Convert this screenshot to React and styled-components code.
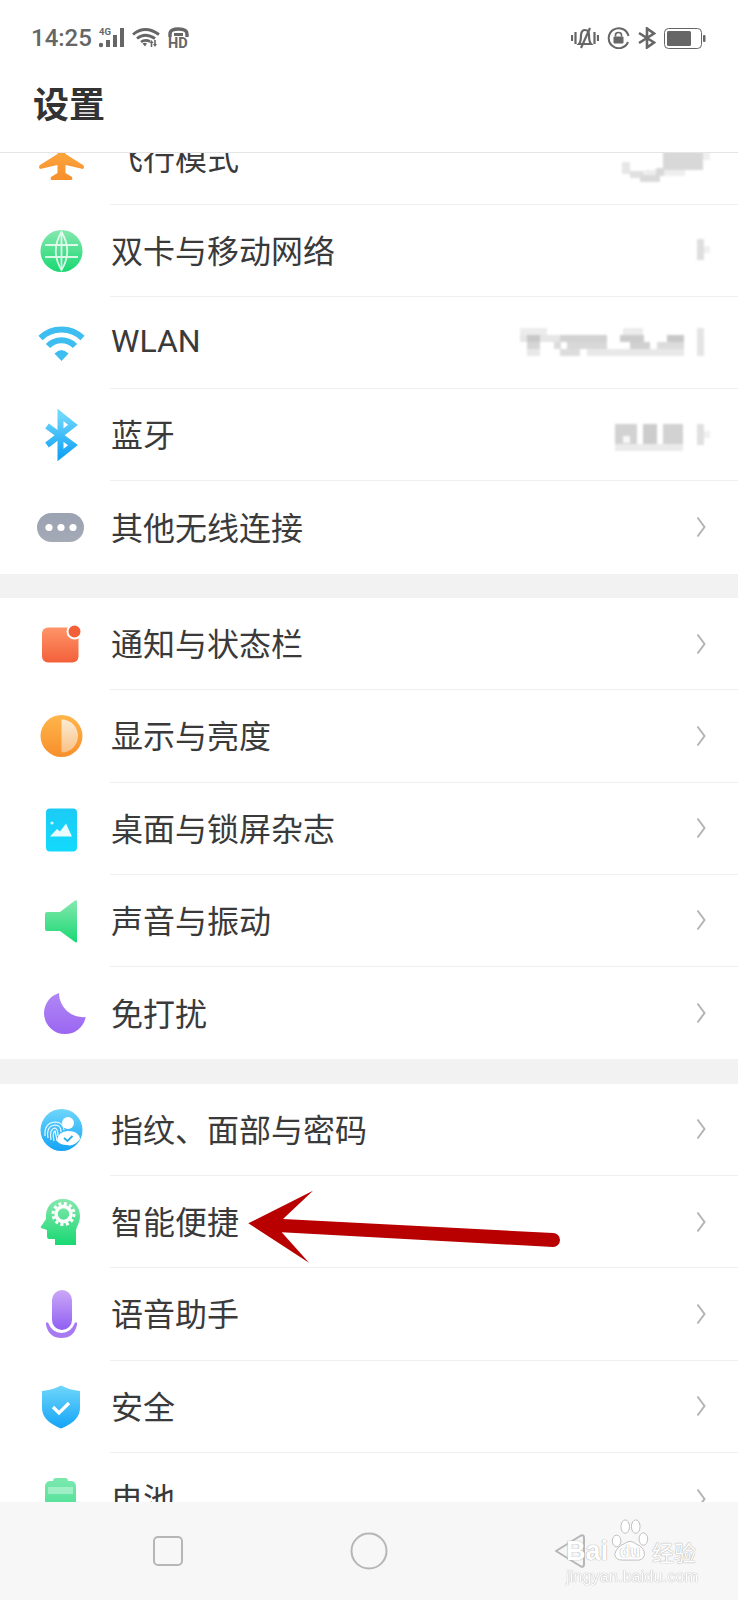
import React from 'react';
import styled, { createGlobalStyle } from 'styled-components';

const GlobalStyle = createGlobalStyle`
  html, body {
    margin: 0;
    padding: 0;
    background: #fff;
  }
`;

const Page = styled.div`
  position: relative;
  width: 738px;
  height: 1600px;
  display: flex;
  flex-direction: column;
  overflow: hidden;
  background: #fff;
  font-family: Roboto, "Noto Sans CJK SC", sans-serif;
`;

const Header = styled.header`
  flex: none;
  height: 153px;
  box-sizing: border-box;
  border-bottom: 1px solid #e4e4e4;
  background: #fff;
`;

const StatusBar = styled.div`
  height: 76px;
  box-sizing: border-box;
  padding: 0 32px 0 31px;
  display: flex;
  align-items: center;
  color: #666;
`;

const Time = styled.span`
  font-size: 24px;
  font-weight: 500;
  margin-right: 7px;
  color: #666;
`;

const StatusGroup = styled.div`
  display: flex;
  align-items: center;
  gap: ${(p) => p.$gap}px;
  margin-left: ${(p) => (p.$right ? 'auto' : '0')};
`;

const Title = styled.h1`
  margin: 0;
  height: 58px;
  padding-left: 33px;
  font-size: 36px;
  line-height: 60px;
  font-weight: 700;
  color: #333;
`;

const ListViewport = styled.main`
  flex: 1;
  min-height: 0;
  overflow: hidden;
`;

// first row is scrolled partly under the header
const List = styled.div`
  margin-top: -40.75px;
`;

const Section = styled.section`
  background: #fff;
`;

const SectionGap = styled.div`
  height: 24.5px;
  background: #f2f2f2;
`;

const Row = styled.div`
  height: 92.25px;
  display: flex;
  align-items: stretch;
`;

const IconSlot = styled.div`
  flex: none;
  width: 110px;
  padding-left: 24px;
  box-sizing: border-box;
  display: flex;
  align-items: center;
`;

const Body = styled.div`
  flex: 1;
  min-width: 0;
  display: flex;
  align-items: center;
  justify-content: space-between;
  padding-right: ${(p) => (p.$mosaic ? 28 : 32)}px;
  border-bottom: ${(p) => (p.$last ? 'none' : '1px solid #efefef')};
`;

const Label = styled.span`
  padding-left: 1px;
  padding-bottom: 3px;
  font-size: 32px;
  color: #3a3a3a;
  white-space: nowrap;
`;

const MosaicSvg = styled.svg`
  flex: none;
  filter: blur(1.2px);
`;

const NavBar = styled.nav`
  position: relative;
  flex: none;
  height: 98px;
  padding: 0 67.5px;
  display: grid;
  grid-template-columns: repeat(3, 201px);
  background: #f7f7f7;
`;

const NavCell = styled.div`
  display: flex;
  align-items: center;
  justify-content: center;
`;

const Watermark = styled.div`
  position: absolute;
  left: 566px;
  top: 18px;
  width: 134px;
  color: #fff;
  text-shadow: 0 0 1px #a8a8a8, 0 0 1px #a8a8a8;
`;

const MarkTop = styled.div`
  height: 46px;
  display: flex;
  align-items: flex-end;
  font-family: "Liberation Sans", sans-serif;
`;

const MarkBai = styled.span`
  font-size: 27px;
  line-height: 30px;
  font-weight: 700;
  width: 45px;
`;

const MarkDu = styled.span`
  position: relative;
  width: 38px;
  font-size: 17px;
  line-height: 28px;
  font-weight: 700;
  text-align: center;
`;

const DuText = styled.span`
  position: relative;
`;

const Paw = styled.svg`
  position: absolute;
  left: -1px;
  bottom: 4px;
`;

const MarkJy = styled.span`
  padding-left: 3px;
  font-family: "Noto Sans CJK SC", sans-serif;
  font-size: 22px;
  line-height: 30px;
`;

const MarkUrl = styled.div`
  margin-top: 2px;
  font-family: "Liberation Sans", sans-serif;
  font-size: 16.4px;
  line-height: 16px;
  white-space: nowrap;
  opacity: 0.9;
`;

const ArrowSvg = styled.svg`
  position: absolute;
  left: 240px;
  top: 1180px;
`;

const HiddenDefs = styled.svg`
  position: absolute;
`;

const Grad = ({ id, from, to }) => (
  <linearGradient id={id} x1="0" y1="0" x2="0" y2="1">
    <stop offset="0" stopColor={from} />
    <stop offset="1" stopColor={to} />
  </linearGradient>
);

const Gradients = () => (
  <HiddenDefs width="0" height="0">
    <defs>
      <Grad id="gOrange" from="#ffb54a" to="#f78f2c" />
      <Grad id="gGreen" from="#86e8ae" to="#18d872" />
      <Grad id="gBlue" from="#6fd6fb" to="#14a4f6" />
      <Grad id="gGray" from="#9ba2b2" to="#a4aab6" />
      <Grad id="gRed" from="#ff9468" to="#f2603a" />
      <Grad id="gPale" from="#fbecd6" to="#f9c184" />
      <Grad id="gCyan" from="#1ccbf6" to="#12dafd" />
      <Grad id="gPurple" from="#b088f5" to="#9b66f2" />
      <Grad id="gMic" from="#cba8f6" to="#8f5ff3" />
      <Grad id="gBatt" from="#78e8ac" to="#38dc8c" />
    </defs>
  </HiddenDefs>
);

const icons = {
  plane: (
    <path
      fill="url(#gOrange)"
      d="M37.5 4Q41 8 41.5 14V26L59 37Q61 39 59 41L41.5 37V45L48 49Q49 52 47 52H28Q26 52 27 49L33.5 45V37L16 41Q14 39 16 37L33.5 26V14Q34 8 37.5 4Z"
    />
  ),
  globe: (
    <g>
      <circle cx="37.5" cy="30" r="21" fill="url(#gGreen)" />
      <g fill="none" stroke="#fff" strokeWidth="1.8" opacity="0.8">
        <path d="M37.5 11Q26 30 37.5 49Q49 30 37.5 11Z" />
        <path d="M37.5 11V49M21 24H54M21 36H54" />
      </g>
    </g>
  ),
  wifi: (
    <g fill="none" stroke="#3dbdf0" strokeWidth="6">
      <path d="M16.5 25A30 30 0 0 1 58.5 25" />
      <path d="M24 33A19 19 0 0 1 51 33" />
      <path fill="#3dbdf0" stroke="none" d="M30.5 40.5Q37.5 33.5 44.5 40.5L37.5 48Z" />
    </g>
  ),
  bluetooth: (
    <path
      fill="none"
      stroke="url(#gBlue)"
      strokeWidth="6"
      d="M23 21L49 40L36.5 50V10L49 20L23 40"
    />
  ),
  more: (
    <g>
      <rect x="13" y="16" width="47" height="29" rx="14.5" fill="url(#gGray)" />
      <circle cx="25" cy="30.5" r="3.6" fill="#fff" />
      <circle cx="37" cy="30.5" r="3.6" fill="#fff" />
      <circle cx="49" cy="30.5" r="3.6" fill="#fff" />
    </g>
  ),
  notify: (
    <g>
      <rect x="18" y="13.5" width="36.5" height="35" rx="6" fill="url(#gRed)" />
      <circle cx="50.5" cy="17.5" r="7" fill="#f2603a" stroke="#fff" strokeWidth="2" />
    </g>
  ),
  display: (
    <g>
      <circle cx="37.5" cy="30" r="21" fill="url(#gOrange)" />
      <path d="M37.5 13.5A16.5 16.5 0 0 1 37.5 46.5Z" fill="url(#gPale)" />
    </g>
  ),
  wallpaper: (
    <g>
      <rect x="22" y="9.5" width="31" height="43" rx="4" fill="url(#gCyan)" />
      <path fill="#fff" opacity="0.9" d="M26 37.5L33 30L36 32.5L42 24.5L48 37.5Z" />
      <circle cx="28" cy="24" r="1.6" fill="#fff" opacity="0.8" />
    </g>
  ),
  sound: (
    <path
      fill="url(#gGreen)"
      d="M23 21H36L51 9.5Q53 8.5 53 11V50Q53 52.5 51 51L36 40H23Q21 40 21 38V23Q21 21 23 21Z"
    />
  ),
  moon: <path fill="url(#gPurple)" d="M35 10A21 21 0 1 0 61.7 34A24 24 0 0 1 35 10Z" />,
  fingerprint: (
    <g>
      <circle cx="37.5" cy="30" r="21" fill="url(#gBlue)" />
      <g fill="none" stroke="#fff" strokeWidth="1.2" opacity="0.9">
        <path d="M21 36Q20 23 31 22Q39 22 40 30" />
        <path d="M24 38Q22 26 31 25Q37 25 37 32" />
        <path d="M27 40Q25 29 31 28Q34 29 34 36" />
        <path d="M30 41Q28 33 31 31Q32 35 33 41" />
      </g>
      <circle cx="44" cy="23" r="6" fill="#fff" />
      <path fill="#fff" d="M33 41Q34 31 44 31Q55 31 56 39Q50 47 43 45Q36 45 33 41Z" />
      <path fill="none" stroke="#2aaeea" strokeWidth="1.8" d="M40 38L43.5 41L48.5 36" />
    </g>
  ),
  assistant: (
    <g>
      <path
        fill="url(#gGreen)"
        d="M39 7C50 7 56 15 56 24C56 31 52 35 52 39V53H31V47H25Q23 47 23 44V38L17 36Q16 35 18 33L22 27C21 15 28 7 39 7Z"
      />
      <circle cx="39.5" cy="22" r="10.5" fill="none" stroke="#fff" strokeWidth="3" strokeDasharray="3 2.5" />
      <circle cx="39.5" cy="22" r="7.5" fill="none" stroke="#fff" strokeWidth="3.5" />
    </g>
  ),
  mic: (
    <g>
      <rect x="28" y="6" width="20" height="40" rx="10" fill="url(#gMic)" />
      <path fill="#a77af2" d="M22 38.5H24Q28 49 37.5 49Q47 49 51 38.5H53V41Q50 54 37.5 54Q25 54 22 41Z" />
    </g>
  ),
  shield: (
    <g>
      <path fill="url(#gBlue)" d="M37 8.5Q46 13 56 14V31Q56 44 37 51.5Q18 44 18 31V14Q28 13 37 8.5Z" />
      <path fill="none" stroke="#fff" strokeWidth="3.2" d="M29 30L35 36L45 26" />
    </g>
  ),
  battery: (
    <g>
      <rect x="29" y="9" width="15" height="6" rx="3" fill="#78e8ac" />
      <rect x="21" y="12" width="31" height="44" rx="5" fill="url(#gBatt)" />
      <rect x="24" y="18" width="25" height="7" fill="#fff" opacity="0.35" />
    </g>
  ),
};

const Icon = ({ name }) => (
  <svg width="75" height="60" viewBox="0 0 75 60">
    {icons[name]}
  </svg>
);

const Chevron = () => (
  <svg width="10" height="22" viewBox="0 0 10 22">
    <path d="M1.5 1.5L8.5 11L1.5 20.5" fill="none" stroke="#b4b4b4" strokeWidth="2" />
  </svg>
);

// blurred values next to some rows [x, y, w, h, grey]
const mosaics = {
  airplane: [
    [153, 24, 40, 18, '#d8d8d8'],
    [193, 24, 7, 8, '#efefef'],
    [135, 42, 40, 6, '#eee'],
    [112, 34, 8, 12, '#e6e6e6'],
    [120, 43, 14, 7, '#e0e0e0'],
    [130, 47, 20, 7, '#dadada'],
    [146, 40, 8, 8, '#d8d8d8'],
  ],
  sim: [
    [187, 19, 7, 21, '#dedede'],
    [194, 26, 6, 7, '#f0f0f0'],
  ],
  wlan: [
    [10, 16, 27, 7, '#ececec'],
    [113, 16, 20, 7, '#ececec'],
    [10, 23, 7, 7, '#e6e6e6'],
    [17, 23, 13, 7, '#c8c8c8'],
    [30, 23, 20, 7, '#e6e6e6'],
    [50, 23, 47, 7, '#d2d2d2'],
    [110, 23, 24, 7, '#cccccc'],
    [157, 23, 17, 7, '#c8c8c8'],
    [17, 30, 13, 7, '#d6d6d6'],
    [44, 30, 7, 7, '#dcdcdc'],
    [57, 30, 40, 7, '#d8d8d8'],
    [120, 30, 20, 7, '#d0d0d0'],
    [147, 30, 27, 7, '#dcdcdc'],
    [17, 37, 13, 7, '#e8e8e8'],
    [50, 37, 20, 7, '#dcdcdc'],
    [77, 37, 97, 7, '#e8e8e8'],
    [187, 16, 7, 28, '#e4e4e4'],
  ],
  bluetooth: [
    [105, 19, 22, 20, '#d2d2d2'],
    [113, 31, 7, 7, '#f8f8f8'],
    [133, 19, 14, 20, '#cccccc'],
    [153, 19, 20, 20, '#d2d2d2'],
    [105, 39, 68, 7, '#ebebeb'],
    [187, 19, 7, 21, '#e0e0e0'],
    [194, 26, 6, 7, '#f0f0f0'],
  ],
};

const Mosaic = ({ name }) => (
  <MosaicSvg width="200" height="60" viewBox="0 0 200 60">
    {mosaics[name].map(([x, y, w, h, c]) => (
      <rect key={`${x}-${y}`} x={x} y={y} width={w} height={h} fill={c} />
    ))}
  </MosaicSvg>
);

const sections = [
  [
    { icon: 'plane', label: '飞行模式', mosaic: 'airplane' },
    { icon: 'globe', label: '双卡与移动网络', mosaic: 'sim' },
    { icon: 'wifi', label: 'WLAN', mosaic: 'wlan' },
    { icon: 'bluetooth', label: '蓝牙', mosaic: 'bluetooth' },
    { icon: 'more', label: '其他无线连接' },
  ],
  [
    { icon: 'notify', label: '通知与状态栏' },
    { icon: 'display', label: '显示与亮度' },
    { icon: 'wallpaper', label: '桌面与锁屏杂志' },
    { icon: 'sound', label: '声音与振动' },
    { icon: 'moon', label: '免打扰' },
  ],
  [
    { icon: 'fingerprint', label: '指纹、面部与密码' },
    { icon: 'assistant', label: '智能便捷' },
    { icon: 'mic', label: '语音助手' },
    { icon: 'shield', label: '安全' },
    { icon: 'battery', label: '电池' },
  ],
];

const StatusLeft = () => (
  <StatusGroup $gap={7}>
    <svg width="26" height="22" viewBox="0 0 26 22">
      <text x="0" y="8" fontSize="9.5" fontWeight="700" fontFamily="Roboto" fill="#666">4G</text>
      <g fill="#666">
        <circle cx="2" cy="18" r="2.2" />
        <rect x="7" y="13" width="4" height="7" />
        <rect x="14" y="8" width="4" height="12" />
        <rect x="21" y="1" width="4" height="19" />
      </g>
    </svg>
    <svg width="28" height="22" viewBox="0 0 28 22">
      <g fill="none" stroke="#666" strokeWidth="2.8">
        <path d="M1 7.5Q13 -2.5 27 7.5" />
        <path d="M5 11.5Q13 5 23 11.5" />
        <path d="M9 15Q13 12 18 14.5" />
      </g>
      <path fill="#666" d="M10.5 16.5Q13 15 15 16.5L13 19.5ZM19.5 13L21.5 16H20.3V20H18.7V16H17.5ZM23 20L21 17H22.2V13H23.8V17H25Z" />
    </svg>
    <svg width="23" height="26" viewBox="0 0 23 26">
      <path fill="none" stroke="#666" strokeWidth="3.4" d="M3 12V9Q3 4 11.5 4Q20 4 20 9V12" />
      <rect x="7" y="8" width="9" height="3" fill="#666" />
      <text x="1" y="22.5" fontSize="14.5" fontWeight="700" fontFamily="Roboto" fill="#666">HD</text>
    </svg>
  </StatusGroup>
);

const StatusRight = () => (
  <StatusGroup $right $gap={8}>
    <svg width="28" height="22" viewBox="0 0 28 22">
      <g fill="none" stroke="#666" strokeWidth="2.2">
        <path d="M1 8V14M4.5 5V17M23.5 5V17M27 8V14" />
        <path d="M8 17Q10 15 10 8Q10.5 3 14 3Q18 3 18 8Q18 15 20 17Z" />
        <path d="M19 1L10 21" />
      </g>
    </svg>
    <svg width="23" height="22" viewBox="0 0 23 22">
      <path fill="none" stroke="#666" strokeWidth="2" d="M21 15A10 10 0 1 1 21.5 9" />
      <rect x="6.5" y="9.5" width="10" height="7" rx="1" fill="#666" />
      <path fill="none" stroke="#666" strokeWidth="1.6" d="M8.5 9.5V8Q8.5 5.5 11.5 5.5Q14.5 5.5 14.5 8V9.5" />
    </svg>
    <svg width="18" height="22" viewBox="0 0 18 22">
      <path fill="none" stroke="#666" strokeWidth="2.6" d="M1 6L16 15.5L9 20.5V1.5L16 6.5L1 16" />
    </svg>
    <svg width="42" height="21" viewBox="0 0 42 21">
      <rect x="0.5" y="0.5" width="37" height="20" rx="4" fill="none" stroke="#666" />
      <rect x="3" y="3" width="24" height="15" rx="1.5" fill="#666" />
      <rect x="39" y="7" width="2.5" height="7" rx="1" fill="#666" />
    </svg>
  </StatusGroup>
);

const App = () => {
  return (
    <Page>
      <GlobalStyle />
      <Gradients />
      <Header>
        <StatusBar>
          <Time>14:25</Time>
          <StatusLeft />
          <StatusRight />
        </StatusBar>
        <Title>设置</Title>
      </Header>
      <ListViewport>
        <List>
          {sections.map((rows, i) => (
            <React.Fragment key={i}>
              {i > 0 && <SectionGap />}
              <Section>
                {rows.map((row, j) => (
                  <Row key={row.label}>
                    <IconSlot>
                      <Icon name={row.icon} />
                    </IconSlot>
                    <Body $last={j === rows.length - 1} $mosaic={!!row.mosaic}>
                      <Label>{row.label}</Label>
                      {row.mosaic ? <Mosaic name={row.mosaic} /> : <Chevron />}
                    </Body>
                  </Row>
                ))}
              </Section>
            </React.Fragment>
          ))}
        </List>
      </ListViewport>
      <NavBar>
        <NavCell>
          <svg width="32" height="32" viewBox="0 0 32 32">
            <rect x="2" y="2" width="28" height="28" rx="4" fill="none" stroke="#b6b6b6" strokeWidth="2" />
          </svg>
        </NavCell>
        <NavCell>
          <svg width="38" height="38" viewBox="0 0 38 38">
            <circle cx="19" cy="19" r="17.5" fill="none" stroke="#b6b6b6" strokeWidth="2" />
          </svg>
        </NavCell>
        <NavCell>
          <svg width="32" height="36" viewBox="0 0 32 36">
            <path d="M2 18L27 2.5Q30 1.5 30 5V31Q30 34.5 27 33.5Z" fill="none" stroke="#b6b6b6" strokeWidth="2" strokeLinejoin="round" />
          </svg>
        </NavCell>
        <Watermark>
          <MarkTop>
            <MarkBai>Bai</MarkBai>
            <MarkDu>
              <Paw width="40" height="44" viewBox="0 0 40 46">
                <g fill="#fff" stroke="#bdbdbd" strokeWidth="1">
                  <ellipse cx="6" cy="24" rx="4.5" ry="6" />
                  <ellipse cx="15" cy="9" rx="4.5" ry="7" />
                  <ellipse cx="26" cy="9" rx="4.5" ry="7" />
                  <ellipse cx="34" cy="22" rx="4.5" ry="6.5" />
                  <path d="M4 38Q6 30 14 27Q20 22 26 27Q36 31 35 39Q33 45 26 44H12Q5 44 4 38Z" />
                </g>
              </Paw>
              <DuText>du</DuText>
            </MarkDu>
            <MarkJy>经验</MarkJy>
          </MarkTop>
          <MarkUrl>jingyan.baidu.com</MarkUrl>
        </Watermark>
      </NavBar>
      <ArrowSvg width="330" height="90" viewBox="0 0 330 90">
        <path
          fill="#b80000"
          d="M8.3 43.3L73 10.7L43 39L313 53A7 7 0 0 1 313 67L41.7 52.3L69 82.7Z"
        />
      </ArrowSvg>
    </Page>
  );
};

export default App;
